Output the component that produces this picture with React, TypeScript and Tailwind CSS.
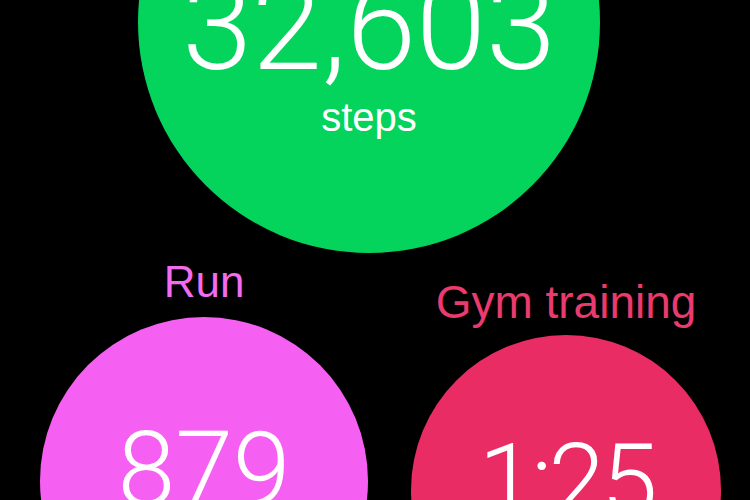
import React from "react";

const sans = "font-['Liberation_Sans','Helvetica_Neue',Arial,sans-serif]";
const thin = "font-['Roboto','Helvetica_Neue',sans-serif] font-light";

export default function App() {
  return (
    <div className="w-[750px] h-[500px] bg-black overflow-hidden">
      {/* steps bubble */}
      <div className="-mt-[209px] ml-[138px] w-[462px] h-[462px] rounded-full bg-[#05d45c] flex flex-col items-center pt-[172px] text-white">
        <div className={`${thin} text-[126px] leading-none`}>32,603</div>
        <div className={`${sans} text-[40px] leading-none mt-[8px]`}>steps</div>
      </div>

      <div className="flex items-start pl-[40px] gap-[43px]">
        {/* run */}
        <div className="w-[328px] flex flex-col items-center pt-[7px]">
          <div className={`${sans} text-[44px] leading-none text-[#f36bee]`}>Run</div>
          <div className="mt-[13px] w-[328px] h-[328px] rounded-full bg-[#f560f2] flex flex-col items-center pt-[101px]">
            <div className={`${thin} text-[104px] leading-none text-white`}>879</div>
          </div>
        </div>

        {/* gym */}
        <div className="w-[310px] flex flex-col items-center pt-[26px]">
          <div className={`${sans} text-[46px] leading-none text-[#ea3a6e] whitespace-nowrap`}>Gym training</div>
          <div className="mt-[10px] w-[310px] h-[310px] rounded-full bg-[#ea2c64] flex flex-col items-center pt-[95px]">
            <div className={`${thin} text-[102px] leading-none tracking-[-4px] text-white`}>1:25</div>
          </div>
        </div>
      </div>
    </div>
  );
}
